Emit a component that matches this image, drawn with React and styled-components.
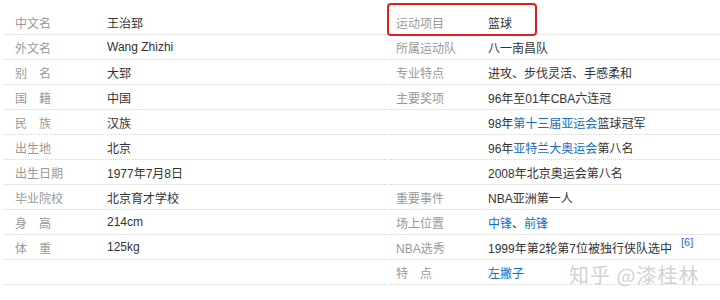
import React from "react";
import styled, { createGlobalStyle } from "styled-components";

const Global = createGlobalStyle`
  html, body { margin: 0; padding: 0; background: #fff; }
  body { font-family: "Liberation Sans", Arial, "Noto Sans CJK SC", sans-serif; }
`;

const Page = styled.div`
  position: relative;
  width: 720px;
  height: 300px;
  overflow: hidden;
  background: #fff;
  padding: 10px 0 0 3px;
  box-sizing: border-box;
  display: flex;
`;

const Column = styled.dl`
  margin: 0;
  width: ${(p) => p.$w}px;
  flex: none;
`;

const Row = styled.div`
  position: relative;
  display: flex;
  align-items: center;
  height: 24px;
  border-bottom: 1px dotted #d4d4d4;
  font-size: 12px;
`;

const Label = styled.dt`
  width: 92px;
  padding-left: 12px;
  flex: none;
  color: #999;
  letter-spacing: ${(p) => (p.$spread ? "1em" : "0")};
  white-space: nowrap;
`;

const Value = styled.dd`
  margin: 0;
  color: #333;
  white-space: nowrap;
`;

const Link = styled.span`
  color: #136ec2;
`;

const Sup = styled.sup`
  color: #3366cc;
  font-size: 11px;
  margin-left: 9px;
  position: relative;
  top: -2px;
`;

const Highlight = styled.div`
  position: absolute;
  left: 3px;
  top: -7px;
  width: 146px;
  height: 29px;
  border: 2px solid #e0201c;
  border-radius: 4px;
  pointer-events: none;
`;

const Watermark = styled.div`
  position: absolute;
  left: 569px;
  top: 260px;
  font-family: "Noto Sans CJK SC", sans-serif;
  font-size: 20px;
  color: #d2d2d2;
  letter-spacing: 1px;
  white-space: nowrap;
`;

const left = [
  ["中文名", "王治郅"],
  ["外文名", "Wang Zhizhi"],
  ["别名", "大郅", true],
  ["国籍", "中国", true],
  ["民族", "汉族", true],
  ["出生地", "北京"],
  ["出生日期", "1977年7月8日"],
  ["毕业院校", "北京育才学校"],
  ["身高", "214cm", true],
  ["体重", "125kg", true],
  ["", ""],
];

const right = [
  ["运动项目", "篮球"],
  ["所属运动队", "八一南昌队"],
  ["专业特点", "进攻、步伐灵活、手感柔和"],
  ["主要奖项", "96年至01年CBA六连冠"],
  ["", <>98年<Link>第十三届亚运会</Link>篮球冠军</>],
  ["", <>96年<Link>亚特兰大奥运会</Link>第八名</>],
  ["", "2008年北京奥运会第八名"],
  ["重要事件", "NBA亚洲第一人"],
  ["场上位置", <><Link>中锋</Link>、<Link>前锋</Link></>],
  ["NBA选秀", <>1999年第2轮第7位被独行侠队选中<Sup>[6]</Sup></>],
  ["特点", <Link>左撇子</Link>, true],
];

export default function App() {
  return (
    <>
      <Global />
      <Page>
        <Column $w={381}>
          {left.map(([l, v, s], i) => (
            <Row key={i}>
              <Label $spread={s}>{l}</Label>
              <Value>{v}</Value>
            </Row>
          ))}
        </Column>
        <Column $w={336}>
          {right.map(([l, v, s], i) => (
            <Row key={i}>
              {i === 0 && <Highlight />}
              <Label $spread={s}>{l}</Label>
              <Value>{v}</Value>
            </Row>
          ))}
        </Column>
        <Watermark>知乎 @漆桂林</Watermark>
      </Page>
    </>
  );
}
